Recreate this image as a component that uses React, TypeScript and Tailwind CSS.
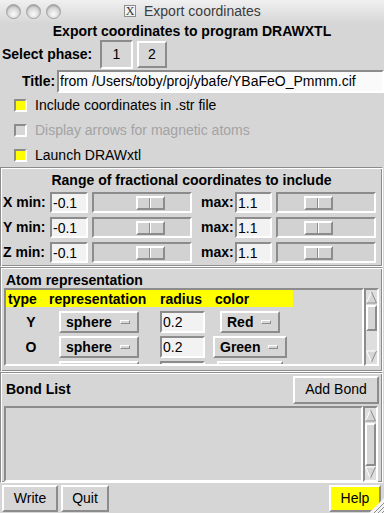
import React from "react";

const raised =
  "border-2 border-t-white border-l-white border-r-[#8c8c8c] border-b-[#8c8c8c]";
const sunken =
  "border-2 border-t-[#8c8c8c] border-l-[#8c8c8c] border-r-white border-b-white";
const groove =
  "border border-t-[#8c8c8c] border-l-[#8c8c8c] border-r-white border-b-white shadow-[inset_1px_1px_0_#fff,inset_-1px_-1px_0_#8c8c8c]";

function Circle() {
  return (
    <div className="w-[15px] h-[15px] rounded-full border border-[#a2a2a2] bg-[radial-gradient(circle_at_50%_70%,#fbfbfb,#d2d2d2_60%,#bdbdbd)] shadow-[inset_0_1px_1px_#9a9a9a]" />
  );
}

function Check({ on, disabled, label }: { on: boolean; disabled?: boolean; label: string }) {
  return (
    <div className="h-[25px] flex items-center">
      <div
        className={`ml-[14px] w-[13px] h-[13px] ${sunken} ${
          on ? "bg-[#ffff00]" : "bg-[#d6d6d6]"
        }`}
      />
      <span className={`ml-[8px] ${disabled ? "text-[#a3a3a3]" : "text-black"}`}>{label}</span>
    </div>
  );
}

function Slider({ offset }: { offset: number }) {
  return (
    <div className={`w-[100px] h-[21px] ${sunken} bg-[#d2d2d2] flex items-center`}>
      <div style={{ marginLeft: offset }} className={`w-[29px] h-[14px] ${raised} bg-[#d2d2d2] flex`}>
        <div className="w-[12px] h-full border-r border-r-[#8c8c8c]" />
        <div className="w-[1px] h-full bg-white" />
      </div>
    </div>
  );
}

function RangeRow({ axis }: { axis: string }) {
  return (
    <div className="h-[25px] flex items-center">
      <span className="font-bold w-[49px] pl-[2px]">{axis} min:</span>
      <div className={`w-[38px] h-[21px] ${sunken} bg-[#f2f2f2] flex items-center pl-[1px] leading-none`}>
        -0.1
      </div>
      <div className="ml-[4px]">
        <Slider offset={42} />
      </div>
      <span className="font-bold ml-[9px] w-[34px]">max:</span>
      <div className={`w-[37px] h-[21px] ${sunken} bg-[#f2f2f2] flex items-center pl-[1px] leading-none`}>
        1.1
      </div>
      <div className="ml-[4px]">
        <Slider offset={26} />
      </div>
    </div>
  );
}

function MenuBtn({ label, w }: { label: string; w: string }) {
  return (
    <div className={`${w} h-[22px] ${raised} bg-[#d6d6d6] flex items-center justify-between pl-[5px] pr-[7px]`}>
      <span className="font-bold leading-none">{label}</span>
      <div className="w-[10px] h-[4px] border border-t-white border-l-white border-r-[#8c8c8c] border-b-[#8c8c8c] bg-[#d6d6d6]" />
    </div>
  );
}

function AtomRow({ type, color, colorW }: { type: string; color: string; colorW: string }) {
  return (
    <div className="h-[22px] flex items-center">
      <span className="w-[50px] text-center font-bold">{type}</span>
      <div className="ml-[3px]">
        <MenuBtn label="sphere" w="w-[80px]" />
      </div>
      <div className={`ml-[21px] w-[45px] h-[22px] ${sunken} bg-[#f2f2f2] flex items-center pl-[1px] leading-none`}>
        0.2
      </div>
      <div className="w-[90px] flex justify-center">
        <MenuBtn label={color} w={colorW} />
      </div>
    </div>
  );
}

function PartialRow() {
  return (
    <div className="h-[22px] flex items-start">
      <span className="w-[50px]" />
      <div className={`ml-[3px] w-[80px] h-[22px] ${raised} bg-[#d6d6d6]`} />
      <div className={`ml-[21px] w-[45px] h-[22px] ${sunken} bg-[#f2f2f2]`} />
      <div className="w-[90px] flex justify-center">
        <div className={`w-[66px] h-[22px] ${raised} bg-[#d6d6d6]`} />
      </div>
    </div>
  );
}

function Arrow({ up }: { up: boolean }) {
  return (
    <svg width="11" height="13" viewBox="0 0 11 13" className="block">
      {up ? (
        <>
          <polygon points="5.5,1 10.5,12 0.5,12" fill="#d6d6d6" />
          <polyline points="0.5,12 5.5,1" stroke="#ffffff" strokeWidth="1" fill="none" />
          <polyline points="5.5,1 10.5,12 0.5,12" stroke="#8c8c8c" strokeWidth="1" fill="none" />
        </>
      ) : (
        <>
          <polygon points="0.5,1 10.5,1 5.5,12" fill="#d6d6d6" />
          <polyline points="5.5,12 0.5,1 10.5,1" stroke="#ffffff" strokeWidth="1" fill="none" />
          <polyline points="10.5,1 5.5,12" stroke="#8c8c8c" strokeWidth="1" fill="none" />
        </>
      )}
    </svg>
  );
}

function Scrollbar({ h, thumbTop, thumbH }: { h: string; thumbTop: number; thumbH: number }) {
  return (
    <div className={`w-[15px] ${h} ${sunken} bg-[#dedede] flex flex-col items-center`}>
      <div className="pt-[1px]">
        <Arrow up />
      </div>
      <div
        style={{ marginTop: thumbTop, height: thumbH }}
        className={`w-[11px] ${raised} bg-[#d6d6d6]`}
      />
      <div className="flex-1" />
      <div className="pb-[1px]">
        <Arrow up={false} />
      </div>
    </div>
  );
}

function Btn({ label, w, yellow }: { label: string; w: string; yellow?: boolean }) {
  return (
    <div
      className={`${w} h-[27px] ${raised} ${
        yellow ? "bg-[#ffff00]" : "bg-[#d6d6d6]"
      } flex items-center justify-center`}
    >
      {label}
    </div>
  );
}

export default function App() {
  return (
    <div className="w-[384px] h-[513px] bg-[#d6d6d6] overflow-hidden relative font-['Liberation_Sans',Arial,Helvetica,sans-serif] text-[14px] text-black">
      {/* title bar */}
      <div className="h-[22px] flex items-center bg-linear-to-b from-[#f0f0f0] to-[#d8d8d8]">
        <div className="ml-[6px] flex gap-[5px]">
          <Circle />
          <Circle />
          <Circle />
        </div>
        <div className="ml-[63px] w-[12px] h-[12px] border border-[#8c8c8c] bg-[#f3f3f3] flex items-center justify-center font-['Liberation_Serif',serif] text-[12px] leading-none text-[#333]">
          X
        </div>
        <span className="ml-[8px] text-[#3c3c3c]">Export coordinates</span>
      </div>

      {/* heading */}
      <div className="h-[18px] leading-[18px] text-center font-bold">
        Export coordinates to program DRAWXTL
      </div>

      {/* select phase */}
      <div className="h-[29px] flex items-center">
        <span className="font-bold w-[100px] pl-[2px]">Select phase:</span>
        <div className={`w-[33px] h-[29px] ${sunken} flex items-center justify-center`}>1</div>
        <div className={`ml-[4px] w-[30px] h-[27px] ${raised} flex items-center justify-center`}>2</div>
      </div>

      {/* title entry */}
      <div className="h-[24px] flex items-center">
        <span className="font-bold ml-[22px] w-[35px]">Title:</span>
        <div className={`w-[327px] h-[23px] ${sunken} bg-[#fafafa] flex items-center pl-[1px] leading-none whitespace-nowrap`}>
          from /Users/toby/proj/ybafe/YBaFeO_Pmmm.cif
        </div>
      </div>

      {/* checkboxes */}
      <Check on label="Include coordinates in .str file" />
      <Check on={false} disabled label="Display arrows for magnetic atoms" />
      <Check on label="Launch DRAWxtl" />

      {/* range frame */}
      <div className={`mt-[-1px] w-[383px] h-[100px] ${groove} flex flex-col pt-[2px]`}>
        <div className="h-[20px] leading-[20px] text-center font-bold">
          Range of fractional coordinates to include
        </div>
        <RangeRow axis="X" />
        <RangeRow axis="Y" />
        <RangeRow axis="Z" />
      </div>

      {/* atom representation frame */}
      <div className={`w-[383px] h-[105px] ${groove} flex flex-col px-[3px]`}>
        <div className="h-[20px] leading-[20px] font-bold pl-[2px] pt-[2px]">Atom representation</div>
        <div className="flex">
          <div className={`w-[360px] h-[78px] ${sunken} overflow-hidden`}>
            <div className="w-[287px] h-[17px] bg-[#ffff00] flex items-center font-bold leading-none">
              <span className="w-[43px] pl-[2px]">type</span>
              <span className="w-[111px]">representation</span>
              <span className="w-[55px]">radius</span>
              <span>color</span>
            </div>
            <div className="mt-[4px] flex flex-col gap-[3px]">
              <AtomRow type="Y" color="Red" colorW="w-[60px]" />
              <AtomRow type="O" color="Green" colorW="w-[74px]" />
              <PartialRow />
            </div>
          </div>
          <Scrollbar h="h-[78px]" thumbTop={1} thumbH={26} />
        </div>
      </div>

      {/* bond list frame */}
      <div className={`w-[383px] h-[111px] ${groove} flex flex-col px-[3px] pt-[2px]`}>
        <div className="h-[29px] flex items-center justify-between">
          <span className="font-bold pl-[2px]">Bond List</span>
          <div className={`w-[86px] h-[28px] ${raised} flex items-center justify-center`}>Add Bond</div>
        </div>
        <div className="mt-[2px] flex">
          <div className={`w-[359px] h-[76px] ${sunken}`} />
          <Scrollbar h="h-[76px]" thumbTop={1} thumbH={46} />
        </div>
      </div>

      {/* bottom buttons */}
      <div className="h-[31px] flex items-center px-[2px]">
        <Btn label="Write" w="w-[56px]" />
        <div className="ml-[3px]">
          <Btn label="Quit" w="w-[48px]" />
        </div>
        <div className="flex-1" />
        <div className="mr-[1px]">
          <Btn label="Help" w="w-[52px]" yellow />
        </div>
      </div>

      {/* resize grip */}
      <svg width="15" height="15" viewBox="0 0 15 15" className="absolute right-0 bottom-0">
        <polygon points="15,0 15,15 0,15" fill="#f4f4f4" />
        <line x1="5" y1="15" x2="15" y2="5" stroke="#8c8c8c" strokeWidth="1" />
        <line x1="9" y1="15" x2="15" y2="9" stroke="#8c8c8c" strokeWidth="1" />
        <line x1="13" y1="15" x2="15" y2="13" stroke="#8c8c8c" strokeWidth="1" />
      </svg>
    </div>
  );
}
